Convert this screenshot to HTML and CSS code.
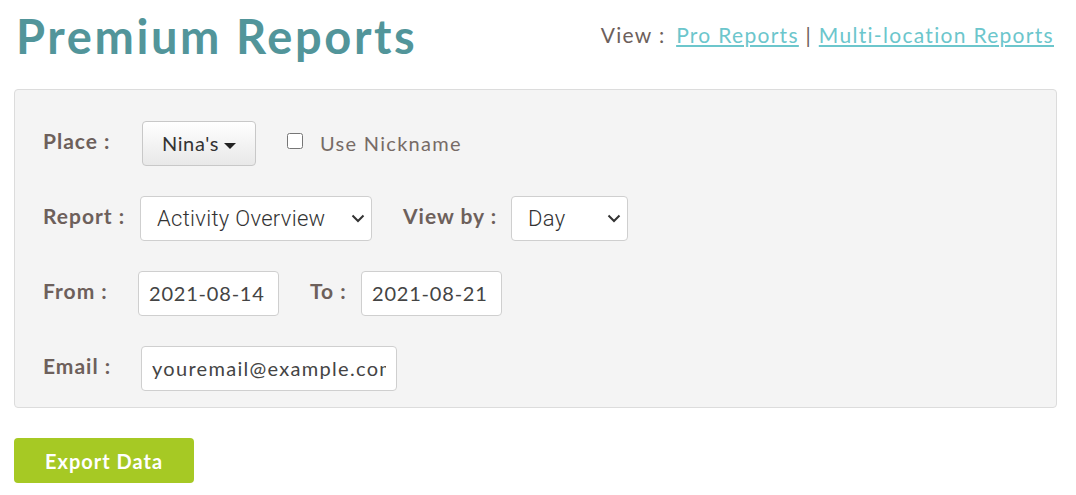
FILE: index.html
```html
<html>
<head>
    <meta http-equiv="Content-Type" content="text/html;charset=utf-8">
    <link rel="stylesheet" href="styles.css">
</head>
<body>
    <div class="page">
        <div class="top">
            <h1 class="title">Premium Reports</h1>
            <div class="views">
                <span class="views-label">View :</span>
                <a href="#">Pro Reports</a>
                <span class="sep">|</span>
                <a href="#">Multi-location Reports</a>
            </div>
        </div>

        <form class="panel">
            <div class="row">
                <label class="lbl lbl-place">Place :</label>
                <button type="button" class="place-btn">Nina's<span class="caret"></span></button>
                <label class="nick"><input type="checkbox" class="chk"> Use Nickname</label>
            </div>
            <div class="row">
                <label class="lbl lbl-report">Report :</label>
                <div class="sel-wrap">
                    <select class="sel sel-report">
                        <option>Activity Overview</option>
                    </select>
                    <svg class="chev" width="14" height="9" viewBox="0 0 14 9"><path d="M1.5 1.5 L7 7 L12.5 1.5" fill="none" stroke="#333" stroke-width="2"/></svg>
                </div>
                <label class="lbl lbl-viewby">View by :</label>
                <div class="sel-wrap">
                    <select class="sel sel-day">
                        <option>Day</option>
                    </select>
                    <svg class="chev" width="14" height="9" viewBox="0 0 14 9"><path d="M1.5 1.5 L7 7 L12.5 1.5" fill="none" stroke="#333" stroke-width="2"/></svg>
                </div>
            </div>
            <div class="row">
                <label class="lbl lbl-from">From :</label>
                <input class="txt txt-date" value="2021-08-14">
                <label class="lbl lbl-to">To :</label>
                <input class="txt txt-date" value="2021-08-21">
            </div>
            <div class="row">
                <label class="lbl lbl-email">Email :</label>
                <input class="txt txt-email" value="youremail@example.com">
            </div>
        </form>

        <button type="button" class="export">Export Data</button>
    </div>
</body>
</html>
```

FILE: styles.css
```css
body {
    margin: 0;
    font-family: 'Lato', 'Open Sans', sans-serif;
    letter-spacing: 0.8px;
    color: #6d605b;
    background: #fff;
}

.page {
    width: 1043px;
    padding-left: 14px;
}

.top {
    display: flex;
    justify-content: space-between;
    align-items: flex-start;
    height: 89px;
}

.title {
    margin: 0;
    padding-left: 2px;
    font-size: 47px;
    font-weight: 700;
    letter-spacing: 2.6px;
    color: #52959a;
    line-height: 72px;
}

.views {
    font-size: 21px;
    letter-spacing: 1.3px;
    padding-top: 22px;
    padding-right: 3px;
}

.views-label {
    margin-right: 4px;
}

.views a {
    color: #6cc6cc;
}

.sep {
    color: #6d605b;
}

.panel {
    margin: 0;
    background: #f4f4f4;
    border: 1px solid #dcdcdc;
    border-radius: 4px;
    padding: 31px 28px 17px;
    display: flex;
    flex-direction: column;
    gap: 31px;
}

.row {
    display: flex;
    align-items: center;
    height: 44px;
}

.lbl {
    font-size: 21px;
    font-weight: 700;
    letter-spacing: 1px;
    margin-top: -5px;
}

.lbl-place { width: 99px; }
.lbl-report { width: 97px; }
.lbl-viewby { margin-left: 31px; width: 108px; }
.lbl-from { width: 95px; }
.lbl-to { margin-left: 31px; width: 51px; }
.lbl-email { width: 98px; }

.place-btn {
    width: 114px;
    height: 45px;
    border: 1px solid #c8c8c8;
    border-radius: 4px;
    background: linear-gradient(#ffffff, #e8e8e8);
    font-family: inherit;
    font-size: 20px;
    letter-spacing: 0.6px;
    color: #333;
}

.caret {
    display: inline-block;
    border-top: 6px solid #222;
    border-left: 6px solid transparent;
    border-right: 6px solid transparent;
    vertical-align: middle;
    margin-left: 5px;
}

.nick {
    margin-left: 31px;
    font-size: 20px;
    letter-spacing: 1.3px;
    color: #776b66;
    display: flex;
    align-items: center;
}

.chk {
    width: 16px;
    height: 16px;
    margin: 0 17px 4px 0;
}

.sel-wrap {
    position: relative;
    display: flex;
}

.chev {
    position: absolute;
    right: 7px;
    top: 18px;
    pointer-events: none;
}

.sel, .txt {
    height: 45px;
    border: 1px solid #cfcfcf;
    border-radius: 4px;
    background: #fff;
    color: #444;
    box-sizing: border-box;
}

.sel {
    appearance: none;
    font-family: 'Roboto', sans-serif;
    font-size: 22px;
    font-weight: 300;
    color: #333;
    letter-spacing: 0.3px;
    padding-left: 16px;
}

.sel-report { width: 232px; }
.sel-day { width: 117px; }

.txt {
    font-family: inherit;
    font-size: 20px;
    letter-spacing: 0.8px;
    padding: 0 10px;
}

.txt-date { width: 141px; }
.txt-email { width: 256px; letter-spacing: 1.3px; }

.export {
    margin-top: 30px;
    width: 180px;
    height: 45px;
    border: none;
    border-radius: 4px;
    background: #a6c924;
    color: #fff;
    font-family: inherit;
    font-size: 20px;
    font-weight: 700;
    letter-spacing: 1px;
}
```
